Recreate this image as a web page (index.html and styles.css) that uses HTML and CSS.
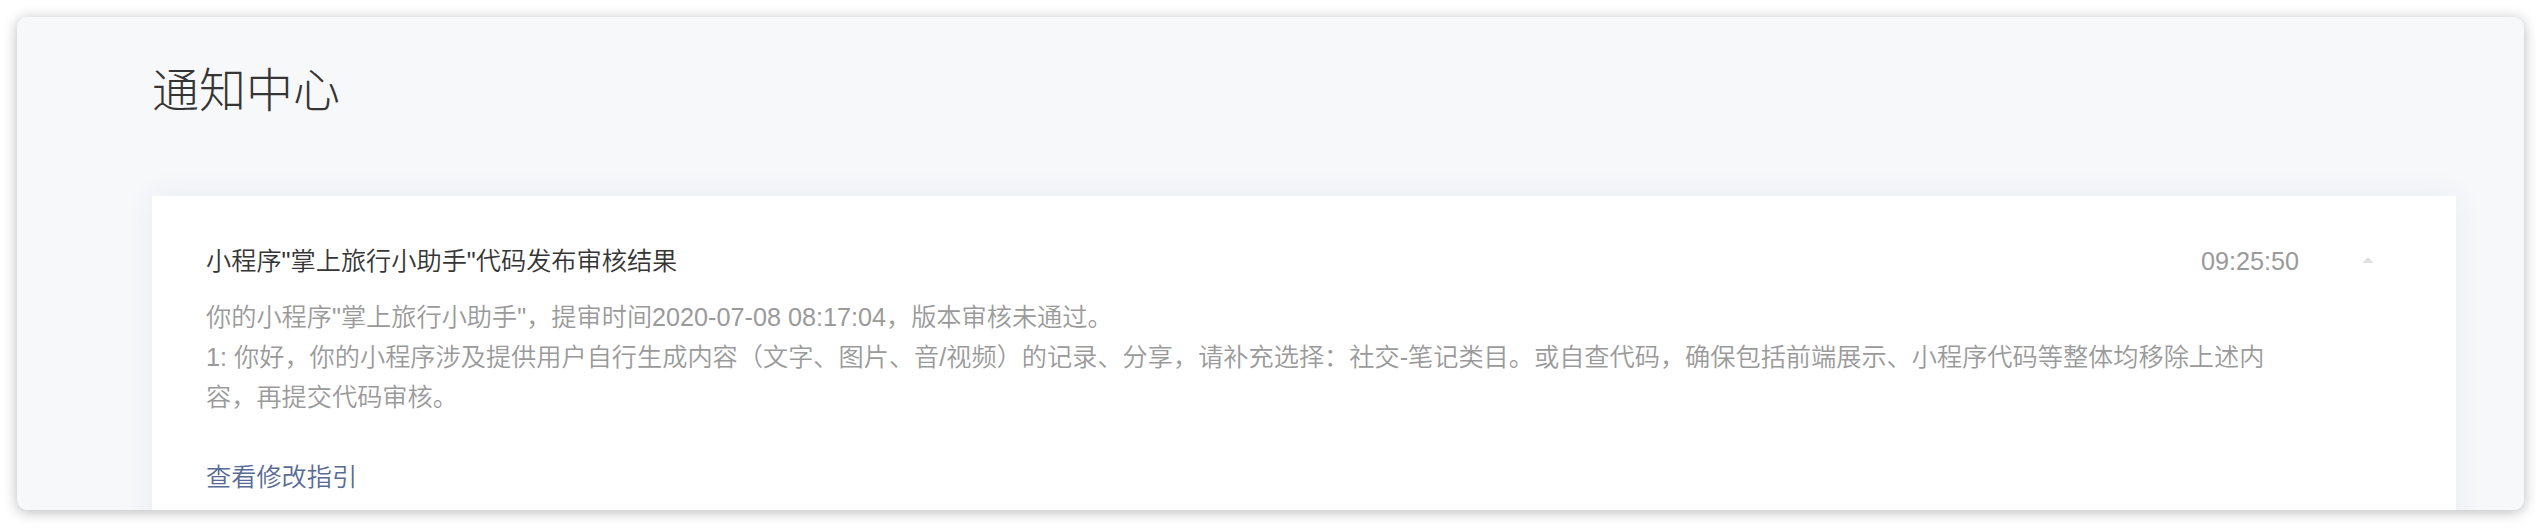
FILE: index.html
```html
<!DOCTYPE html>
<html lang="zh-CN">
<head>
<meta charset="utf-8">
<title>通知中心</title>
<link rel="stylesheet" href="styles.css">
</head>
<body>
  <div class="window">
    <h1 class="page-title">通知中心</h1>
    <div class="card">
      <div class="card-header">
        <div class="notice-title">小程序"掌上旅行小助手"代码发布审核结果</div>
        <div class="notice-time">09:25:50</div>
        <span class="caret"></span>
      </div>
      <div class="notice-body">
        <p class="line">你的小程序"掌上旅行小助手"，提审时间2020-07-08 08:17:04，版本审核未通过。</p>
        <p class="line">1: 你好，你的小程序涉及提供用户自行生成内容（文字、图片、音/视频）的记录、分享，请补充选择：社交-笔记类目。或自查代码，确保包括前端展示、小程序代码等整体均移除上述内容，再提交代码审核。</p>
      </div>
      <a class="notice-link" href="#">查看修改指引</a>
    </div>
  </div>
</body>
</html>
```

FILE: styles.css
```css
html, body {
  margin: 0;
  padding: 0;
}

body {
  background: #ffffff;
  width: 2542px;
  height: 528px;
  box-sizing: border-box;
  padding: 17px 18px 18px 17px;
  font-family: "Liberation Sans", "Noto Sans CJK SC", sans-serif;
  overflow: hidden;
}

.window {
  height: 493px;
  box-sizing: border-box;
  background: #f7f8fa;
  border-radius: 10px;
  box-shadow: 0 2px 14px rgba(0, 0, 0, 0.28);
  overflow: hidden;
  padding: 41px 68px 0 135px;
}

.page-title {
  margin: 0;
  font-size: 47px;
  line-height: 66px;
  font-weight: 300;
  color: #353535;
}

.card {
  margin-top: 72px;
  background: #ffffff;
  box-shadow: 0 0 30px rgba(40, 60, 110, 0.07);
  padding: 45px 82px 40px 54px;
}

.card-header {
  display: flex;
  align-items: center;
  height: 40px;
}

.notice-title {
  flex: 1;
  font-size: 25.2px;
  line-height: 40px;
  font-weight: 350;
  color: #353535;
}

.notice-time {
  font-size: 25.2px;
  line-height: 40px;
  color: #9a9a9a;
}

.caret {
  margin-left: 63px;
  width: 0;
  height: 0;
  border-left: 6.5px solid transparent;
  border-right: 6.5px solid transparent;
  border-bottom: 6px solid #e2e2e2;
  margin-top: -3px;
}

.notice-body {
  margin-top: 16px;
  padding-right: 96px;
  font-size: 25.2px;
  line-height: 40px;
  font-weight: 350;
  color: #9a9a9a;
}

.line {
  margin: 0;
}

.notice-link {
  display: block;
  margin-top: 40px;
  font-size: 25.2px;
  line-height: 40px;
  font-weight: 350;
  color: #576b95;
  text-decoration: none;
}
```
